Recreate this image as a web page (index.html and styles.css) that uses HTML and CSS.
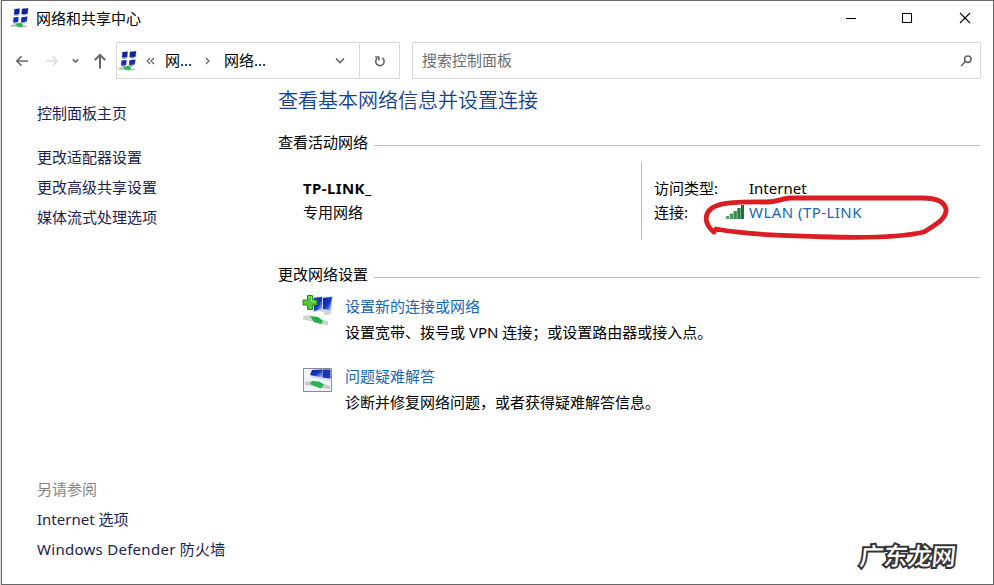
FILE: index.html
```html
<!DOCTYPE html>
<html lang="zh-CN">
<head>
    <meta charset="UTF-8">
    <meta name="viewport" content="width=device-width, initial-scale=1.0">
    <title>网络和共享中心</title>
    <link rel="stylesheet" href="styles.css">
</head>
<body>
    <!-- Icônes partagées -->
    <svg class="defs" width="0" height="0">
        <defs>
            <linearGradient id="screen" x1="0" y1="0" x2="1" y2="1">
                <stop offset="0" stop-color="#0b1f9c"/>
                <stop offset="0.55" stop-color="#1838c0"/>
                <stop offset="1" stop-color="#b4c8f4"/>
            </linearGradient>
            <linearGradient id="bars" x1="0" y1="0" x2="1" y2="0">
                <stop offset="0" stop-color="#5fa872"/>
                <stop offset="0.6" stop-color="#2c8448"/>
                <stop offset="1" stop-color="#1c6b35"/>
            </linearGradient>
            <symbol id="network" viewBox="0 0 20 20">
                <path d="M3 1l6-.6-.5 7L2.300 8zM10.500 .6l7.500-.6-.8 7-7.200.5z" fill="#dbe3f2"/>
                <path d="M3.500 1l5.200-.4-.5 5.600-5.200.5zM11 .8l6.200-.6-.7 5.600-6 .5z" fill="#14219c"/>
                <path d="M2 9.500l6-.6-.5 6.800-6 .5zM10 9l6.800-.6-.8 7-6.500.6z" fill="#dbe3f2"/>
                <path d="M2.600 9.600l5-.5-.5 5-5 .5zM10.500 9.200l6-.6-.8 5-5.700.6z" fill="#1a2cae"/>
                <path d="M4 7.200l3-.2M12 6.800l3-.3M3 15l3-.3M11 14.600l3-.3" stroke="#8493b5"/>
                <path d="M0 17l5-.8 4 1 7 .5v1.400l-7 .3-4-1-5 .3z" fill="#a9bcae"/>
                <path d="M4.500 16l5-1.500 2.500 2-1 2.800-4.500-.5z" fill="#2fb552"/>
            </symbol>
        </defs>
    </svg>

    <div class="window">
        <header class="titlebar">
            <svg class="app-icon" width="20" height="20"><use href="#network"/></svg>
            <span class="title">网络和共享中心</span>
            <div class="controls">
                <svg width="12" height="12" viewBox="0 0 12 12"><path d="M1 6.500h10"/></svg>
                <svg width="12" height="12" viewBox="0 0 12 12"><path d="M.5 1.500h9v9h-9z"/></svg>
                <svg width="12" height="12" viewBox="0 0 12 12"><path d="M1 1l10 10M11 1L1 11"/></svg>
            </div>
        </header>

        <nav class="toolbar">
            <div class="arrows">
                <svg width="14" height="12" viewBox="0 0 14 12"><path d="M13 6H2M6.500 1.300L1.800 6l4.700 4.700"/></svg>
                <svg class="disabled" width="14" height="12" viewBox="0 0 14 12"><path d="M1 6h11M7.500 1.300L12.200 6l-4.700 4.700"/></svg>
                <svg class="recent" width="7" height="6" viewBox="0 0 7 6"><path d="M.8 1.300l2.700 2.700 2.700-2.700"/></svg>
                <svg class="up" width="14" height="16" viewBox="0 0 14 16"><path d="M7 15.500V2M1.800 7L7 1.800 12.200 7"/></svg>
            </div>
            <div class="address">
                <svg class="address-icon" width="20" height="20"><use href="#network"/></svg>
                <svg class="crumb-more" width="9" height="8" viewBox="0 0 9 8"><path d="M4 1L1 4l3 3M8 1L5 4l3 3"/></svg>
                <span class="crumb">网...</span>
                <svg class="crumb-sep" width="6" height="8" viewBox="0 0 6 8"><path d="M1 1l3 3-3 3"/></svg>
                <span class="crumb">网络...</span>
                <svg class="drop" width="10" height="8" viewBox="0 0 10 8"><path d="M1 1.500l4 4 4-4"/></svg>
                <div class="refresh">
                    <svg width="12" height="14" viewBox="0 0 12 14"><path d="M3.300 4.200A4.200 4.200 0 1 0 8.300 4M1.200 3h3.600v3.600"/></svg>
                </div>
            </div>
            <div class="search">
                <span>搜索控制面板</span>
                <svg width="12" height="12" viewBox="0 0 12 12"><circle cx="7.800" cy="4.200" r="3.200"/><path d="M5.500 6.500L1 11"/></svg>
            </div>
        </nav>

        <div class="content">
            <aside class="sidebar">
                <a class="home">控制面板主页</a>
                <a>更改适配器设置</a>
                <a>更改高级共享设置</a>
                <a>媒体流式处理选项</a>
                <div class="see-also">
                    <span>另请参阅</span>
                    <a>Internet 选项</a>
                    <a class="firewall">Windows Defender 防火墙</a>
                </div>
            </aside>

            <main class="main">
                <h1>查看基本网络信息并设置连接</h1>

                <h2 class="section-title">查看活动网络</h2>
                <div class="active-network">
                    <div class="network-name">
                        <strong>TP-LINK_</strong>
                        <span>专用网络</span>
                    </div>
                    <div class="network-info">
                        <span>访问类型:</span>
                        <span class="value">Internet</span>
                        <span>连接:</span>
                        <a class="link wlan">
                            <svg width="20" height="16" viewBox="0 0 20 16" fill="url(#bars)"><path d="M1 12h3v3H1zM4.700 9.500H8V15H4.700zM8.500 7h3.300v8H8.500zM12.300 4h3.300v11h-3.300zM16 1h3v14h-3z"/></svg>
                            WLAN (TP-LINK
                        </a>
                        <!-- Entourage rouge autour de la connexion -->
                        <svg class="marker" width="250" height="50" viewBox="0 0 250 50">
                            <path d="M68 10C48 10 22 9 12 16C3 23 5 33 14 40L16 37C50 43 90 44 130 45C165 46 198 46 224 40C235 33 247 27 246 17C244 8 232 6 222 6H90C79 7 78 10 67 10"/>
                        </svg>
                    </div>
                </div>

                <h2 class="section-title">更改网络设置</h2>
                <div class="task">
                    <svg width="32" height="32" viewBox="0 0 32 32">
                        <path d="M11 4l9-1v15l-9 1zM20 4l11-1-2 18-9-2z" fill="#c7d5ea"/>
                        <path d="M12 5l8-1v12l-8 2z" fill="url(#screen)"/>
                        <path d="M21 5l9-1-2 13-7-1z" fill="url(#screen)"/>
                        <path d="M21 20l7-1 1 2-6 1zM1 23l6-1 6 3 13 3v4l-6-.5-9-3-10-2z" fill="#cbd4cf"/>
                        <path d="M8 23l8 1 5 4-2 3-7-2z" fill="#21ad48"/>
                        <path d="M5.500 2.500h5v4.500H15v5h-4.500v4.500h-5V12H1V7h4.500z" fill="#55c936" stroke="#258b21"/>
                        <path d="M7 4h2.500v4.500h4" fill="none" stroke="#9ce881"/>
                    </svg>
                    <div>
                        <a class="link">设置新的连接或网络</a>
                        <p>设置宽带、拨号或 VPN 连接；或设置路由器或接入点。</p>
                    </div>
                </div>
                <div class="task">
                    <svg width="32" height="32" viewBox="0 0 32 32">
                        <path d="M1.500 5.500h28v23h-28z" fill="#f1f3f6" stroke="#858a91"/>
                        <path d="M9 7l19-1v12l-19-4z" fill="#cdd9ee"/>
                        <path d="M10 7l10-.5v8L8 12z" fill="url(#screen)"/>
                        <path d="M20.500 6.500h8v9l-8-1z" fill="#1c35aa"/>
                        <path d="M3 19l7-1 15 4 3 1v3l-9-1-8-2-8-1z" fill="#c3ccc7"/>
                        <path d="M10 18l7 .5 5 3-3 4-8-3-3-2z" fill="#2cb354"/>
                    </svg>
                    <div>
                        <a class="link">问题疑难解答</a>
                        <p>诊断并修复网络问题，或者获得疑难解答信息。</p>
                    </div>
                </div>
            </main>
        </div>
        <div class="watermark">广东龙网</div>
    </div>
</body>
</html>
```
FILE: styles.css
```css
* {
    box-sizing: border-box;
}

body {
    margin: 0;
    padding: 0 0 0 1px;
    background-color: #dcdcdc;
    font-family: "Noto Sans", "Noto Sans CJK SC", sans-serif;
    font-size: 15px;
    color: #000;
    overflow: hidden;
}

svg {
    display: block;
    flex-shrink: 0;
}

.defs {
    position: absolute;
}

.window {
    position: relative;
    display: flex;
    flex-direction: column;
    height: 585px;
    border: 1px solid #686868;
    background-color: #fff;
}

.titlebar {
    display: flex;
    align-items: center;
    height: 34px;
    padding-left: 9px;
}

.title {
    margin-left: 5px;
    padding-bottom: 2px;
}

.controls {
    display: flex;
    gap: 45px;
    margin-left: auto;
    margin-right: 22px;
    fill: none;
    stroke: #000;
    stroke-width: 1.1;
}

.toolbar {
    display: flex;
    height: 37px;
    margin: 7px 12px 0 0;
    fill: none;
    stroke: #666;
    stroke-width: 1.6;
}

.arrows {
    display: flex;
    align-items: center;
    width: 114px;
    padding-left: 13px;
}

.arrows .disabled {
    margin-left: 16px;
    stroke: #ddd;
}

.arrows .recent {
    margin-left: 13px;
}

.arrows .up {
    margin-left: 14px;
    stroke-width: 2;
}

.address {
    display: flex;
    align-items: center;
    width: 284px;
    padding-left: 2px;
    border: 1px solid #d9d9d9;
}

.address-icon {
    stroke: none;
}

.crumb {
    line-height: 35px;
}

.crumb-more {
    margin: 0 10px 0 7px;
    stroke-width: 1.2;
}

.crumb-sep {
    margin: 0 13px;
    stroke-width: 1.3;
}

.drop {
    margin-left: auto;
    margin-right: 14px;
}

.refresh {
    display: flex;
    align-items: center;
    justify-content: center;
    width: 40px;
    height: 100%;
    border-left: 1px solid #d9d9d9;
}

.search {
    display: flex;
    flex: 1;
    align-items: center;
    justify-content: space-between;
    margin-left: 12px;
    padding: 0 8px 0 9px;
    border: 1px solid #d9d9d9;
    color: #6d6d6d;
}

.search span {
    padding-bottom: 2px;
}

.content {
    display: flex;
    flex: 1;
}

.sidebar {
    display: flex;
    flex-direction: column;
    width: 276px;
    padding: 19px 0 20px 35px;
    line-height: 30px;
    color: #1a2350;
}

.sidebar .home {
    margin-bottom: 14px;
}

.see-also {
    display: flex;
    flex-direction: column;
    margin-top: auto;
}

.see-also span {
    color: #858585;
}

.firewall {
    letter-spacing: 0.28px;
}

.main {
    flex: 1;
    padding: 6px 13px 0 0;
}

h1 {
    margin: 0;
    font-size: 20px;
    font-weight: 350;
    line-height: 32px;
    color: #15408f;
}

.section-title {
    display: flex;
    align-items: center;
    gap: 6px;
    margin: 14px 0 0;
    font-size: 15px;
    font-weight: normal;
    line-height: 22px;
}

.section-title::after {
    content: "";
    flex: 1;
    height: 1px;
    margin-top: 7px;
    background-color: #bfbfbf;
}

.active-network {
    display: flex;
    height: 78px;
    margin-top: 9px;
    line-height: 24px;
}

.network-name {
    display: flex;
    flex-direction: column;
    width: 364px;
    padding: 14px 0 0 25px;
    border-right: 1px solid #bfbfbf;
}

.network-name strong {
    letter-spacing: 0.4px;
}

.network-info {
    position: relative;
    display: grid;
    grid-template-columns: 71px 1fr;
    align-content: start;
    flex: 1;
    padding: 14px 0 0 12px;
}

.network-info .value {
    padding-left: 24px;
}

.link {
    color: #1a66b3;
}

.wlan {
    display: flex;
    align-items: center;
    gap: 4px;
    letter-spacing: 0.45px;
}

/* trait dessiné par-dessus la ligne WLAN */
.marker {
    position: absolute;
    left: 58px;
    top: 30px;
    fill: none;
    stroke: #d71f24;
    stroke-width: 4.800;
    stroke-linecap: round;
    stroke-linejoin: round;
}

.active-network + .section-title {
    margin-top: 23px;
}

.task {
    display: flex;
    gap: 11px;
    margin: 8px 0 18px;
    padding-left: 24px;
    line-height: 26px;
}

.task p {
    margin: 0;
}

.watermark {
    position: absolute;
    right: 37px;
    bottom: 12px;
    font-size: 24px;
    font-weight: 500;
    line-height: 32px;
    color: #fff;
    transform: skewX(-6deg);
    -webkit-text-stroke: 4px #333;
    paint-order: stroke fill;
}
```
